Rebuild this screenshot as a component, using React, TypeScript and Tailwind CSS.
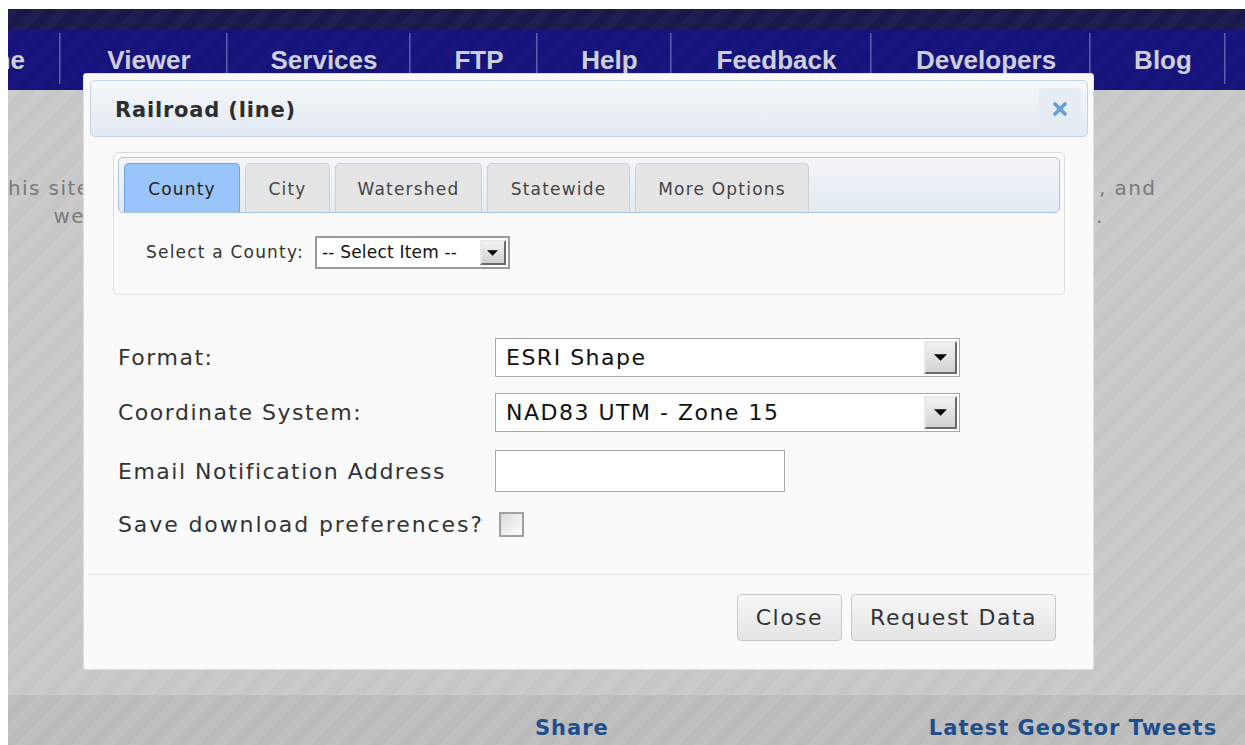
import { X } from 'lucide-react';

const navItems = [
  { label: 'Viewer', w: 'w-[165px]' },
  { label: 'Services', w: 'w-[181px]' },
  { label: 'FTP', w: 'w-[125px]' },
  { label: 'Help', w: 'w-[132px]' },
  { label: 'Feedback', w: 'w-[198px]' },
  { label: 'Developers', w: 'w-[217px]' },
  { label: 'Blog', w: 'w-[133px]' },
];

const tabs = [
  { label: 'County', w: 'w-[116px]' },
  { label: 'City', w: 'w-[85px]' },
  { label: 'Watershed', w: 'w-[147px]' },
  { label: 'Statewide', w: 'w-[143px]' },
  { label: 'More Options', w: 'w-[174px]' },
];

const Separator = () => <span className="block h-[51px] w-[2px] shrink-0 self-start mt-[3px] bg-[#3c3c96] border-l border-[#5c5cb0]" />;

const SelectArrow = ({ small }: { small?: boolean }) => (
  <span
    className={`flex items-center justify-center shrink-0 border-2 border-t-[#e8e8e8] border-l-[#e8e8e8] border-r-[#6a6a6a] border-b-[#6a6a6a] bg-gradient-to-b from-[#f2f2f2] to-[#d2d2d2] ${
      small ? 'w-[26px] h-[25px]' : 'w-[33px] h-[33px]'
    }`}
  >
    <svg width={small ? 11 : 13} height={small ? 6 : 7} viewBox="0 0 12 6">
      <path d="M0 0 L12 0 L6 6 Z" fill="#000" />
    </svg>
  </span>
);

const FakeSelect = ({ value }: { value: string }) => (
  <div className="flex items-center justify-between w-[465px] h-[39px] bg-white border border-[#a8a8a8] pl-[10px] pr-[2px]">
    <span className="text-[22px] tracking-[1.5px] text-[#111]">{value}</span>
    <SelectArrow />
  </div>
);

const Button = ({ children }: { children: string }) => (
  <button className="h-[47px] px-[18px] rounded-[4px] border border-[#c8c8c8] bg-gradient-to-b from-[#f7f7f7] to-[#e4e4e4] text-[22px] tracking-[1.5px] text-[#333]">
    {children}
  </button>
);

export default function App() {
  return (
    <div
      className="relative w-[1245px] h-[745px] overflow-hidden bg-white pl-[8px] pt-[9px]"
      style={{ fontFamily: '"DejaVu Sans", Verdana, sans-serif' }}
    >
      <div className="flex flex-col h-[736px]">
        {/* header strip + nav */}
        <div className="h-[21px] bg-[#1c1b4b] bg-[repeating-linear-gradient(135deg,#1f1e50_0px,#1f1e50_9px,#19184a_9px,#19184a_18px)]" />
        <nav className="flex h-[60px] bg-[#17157c] bg-[repeating-linear-gradient(135deg,#18167e_0px,#18167e_9px,#151379_9px,#151379_18px)] text-[26px] font-bold text-[#cfcfdc]" style={{ fontFamily: '"Liberation Sans", Arial, sans-serif' }}>
          <div className="flex items-center justify-end overflow-hidden w-[51px] pr-[34px] shrink-0">
            <span className="whitespace-nowrap">Home</span>
          </div>
          <Separator />
          {navItems.map((item) => (
            <div key={item.label} className="flex shrink-0">
              <div className={`flex items-center justify-center ${item.w} pl-[11px] shrink-0`}>{item.label}</div>
              <Separator />
            </div>
          ))}
        </nav>

        {/* page body behind the dialog */}
        <div className="flex-1 bg-[repeating-linear-gradient(135deg,#cbcbcb_0px,#cbcbcb_10px,#c6c6c6_10px,#c6c6c6_20px)] text-[20px] tracking-[1.4px] text-[#7a7a7a] pt-[84px]">
          <div className="grid grid-cols-[77px_1fr_146px] leading-[28px]">
            <span className="whitespace-nowrap overflow-hidden">his site</span>
            <span />
            <span className="whitespace-nowrap">, and</span>
            <span className="text-right whitespace-nowrap">we</span>
            <span />
            <span className="-ml-[3px]">.</span>
          </div>
        </div>

        <div className="h-[50px] flex bg-[repeating-linear-gradient(135deg,#c0c0c0_0px,#c0c0c0_10px,#bbbbbb_10px,#bbbbbb_20px)] text-[21px] font-bold tracking-[1px] text-[#1e4f8c] pt-[18px]">
          <span className="ml-[527px]">Share</span>
          <span className="ml-[320px]">Latest GeoStor Tweets</span>
        </div>
      </div>

      {/* dialog */}
      <div className="absolute left-[83px] top-[73px] w-[1011px] h-[597px] bg-[#fafafa] border border-[#dedede] rounded-[3px] pt-[6px] pl-[6px] pr-[5px] flex flex-col">
        <div className="flex items-center justify-between h-[57px] rounded-[5px] border border-[#c3d4e5] bg-gradient-to-b from-[#f5f8fb] to-[#e2e9f2] pl-[24px] pr-[6px]">
          <span className="pt-[4px] text-[21px] font-bold tracking-[0.8px] text-[#2e2e2e]">Railroad (line)</span>
          <span className="flex items-center justify-center w-[42px] h-[42px] rounded-[4px] bg-[#e6edf5]">
            <X size={20} strokeWidth={4.5} color="#6aa0d2" />
          </span>
        </div>

        <div className="mx-[23px] mt-[15px] h-[143px] rounded-[5px] border border-[#dcdcdc] bg-[#fafafa] p-[4px]">
          <div className="flex h-[56px] items-end gap-[5px] rounded-[5px] border border-[#a9c5de] bg-gradient-to-b from-[#f3f6fa] to-[#e2eaf3] pl-[5px]">
            {tabs.map((t, i) => (
              <div
                key={t.label}
                className={`flex items-center justify-center ${t.w} h-[49px] pt-[3px] rounded-t-[5px] border border-b-0 text-[17px] tracking-[1.2px] ${
                  i === 0 ? 'bg-[#9bc5fa] border-[#6ea4e4] text-[#1e1e1e]' : 'bg-[#e5e5e5] border-[#cfcfcf] text-[#444]'
                }`}
              >
                {t.label}
              </div>
            ))}
          </div>
          <div className="flex items-center gap-[11px] pl-[28px] mt-[23px] text-[17px] tracking-[1.2px] text-[#333]">
            <span>Select a County:</span>
            <div className="flex items-center h-[33px] w-[195px] bg-white border-2 border-[#9a9a9a] pl-[5px] pr-[2px] justify-between">
              <span className="text-[17px] tracking-[0.2px] text-[#111]">-- Select Item --</span>
              <SelectArrow small />
            </div>
          </div>
        </div>

        <div className="grid grid-cols-[377px_auto] items-center gap-y-[16px] pl-[28px] mt-[43px] text-[22px] tracking-[1.5px] text-[#333]">
          <span>Format:</span>
          <FakeSelect value="ESRI Shape" />
          <span>Coordinate System:</span>
          <FakeSelect value="NAD83 UTM - Zone 15" />
          <span className="mt-[2px]">Email Notification Address</span>
          <div className="mt-[2px] w-[290px] h-[42px] bg-white border border-[#a8a8a8]" />
          <span className="mt-[4px] leading-[25px] whitespace-nowrap tracking-[1.9px]">Save download preferences?</span>
          <span className="mt-[4px] ml-[4px] block w-[25px] h-[25px] border-2 border-[#a0a0a0] bg-gradient-to-br from-[#dcdcdc] to-[#fdfdfd]" />
        </div>

        <div className="mt-[37px] -mx-[2px] border-t border-[#dedede] flex justify-end gap-[9px] pt-[19px] pr-[34px]">
          <Button>Close</Button>
          <Button>Request Data</Button>
        </div>
      </div>
    </div>
  );
}
